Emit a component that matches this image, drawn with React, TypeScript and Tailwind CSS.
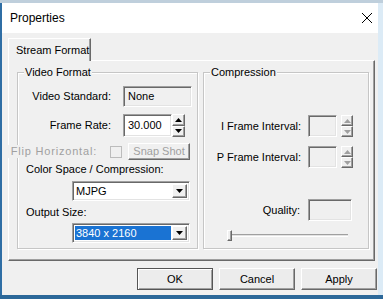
import React from "react";

const raised =
  "border border-t-white border-l-white border-r-[#696969] border-b-[#696969] shadow-[inset_-1px_-1px_0_#a0a0a0]";
const sunken =
  "border border-t-[#a0a0a0] border-l-[#a0a0a0] border-r-white border-b-white shadow-[inset_1px_1px_0_#696969,inset_-1px_-1px_0_#e3e3e3]";

function Arrow({ up, color = "#000" }: { up?: boolean; color?: string }) {
  return (
    <svg width="7" height="4" viewBox="0 0 7 4">
      {up ? (
        <path d="M3.5 0 L7 4 L0 4 Z" fill={color} />
      ) : (
        <path d="M0 0 L7 0 L3.5 4 Z" fill={color} />
      )}
    </svg>
  );
}

function Spinner({ disabled, w }: { disabled?: boolean; w: string }) {
  const c = disabled ? "#a0a0a0" : "#000";
  return (
    <div className={`flex flex-col ${w} h-full`}>
      <div className={`flex-1 flex items-center justify-center bg-[#f0f0f0] ${raised}`}>
        <Arrow up color={c} />
      </div>
      <div className={`flex-1 flex items-center justify-center bg-[#f0f0f0] ${raised}`}>
        <Arrow color={c} />
      </div>
    </div>
  );
}

function Combo({ text, selected }: { text: string; selected?: boolean }) {
  return (
    <div className={`ml-[54px] w-[118px] h-[20px] bg-white flex items-stretch p-[2px] ${sunken}`}>
      <div className="flex-1 flex items-center pr-[1px]">
        <span
          className={`h-full flex items-center pl-[1px] flex-1 ${
            selected ? "bg-[#1a73d3] text-white" : "text-black"
          }`}
        >
          {text}
        </span>
      </div>
      <div className={`w-[15px] flex items-center justify-center bg-[#f0f0f0] ${raised}`}>
        <Arrow />
      </div>
    </div>
  );
}

function Group({
  title,
  className,
  children,
}: {
  title: string;
  className: string;
  children: React.ReactNode;
}) {
  return (
    <div
      className={`relative border border-[#c6c6c6] shadow-[inset_1px_1px_0_#fff,1px_1px_0_#fff] ${className}`}
    >
      <span className="absolute -top-[8px] left-[6px] bg-[#f0f0f0] px-[1px] leading-[14px]">
        {title}
      </span>
      {children}
    </div>
  );
}

function Btn({ label, def }: { label: string; def?: boolean }) {
  return (
    <div
      className={`w-[76px] h-[22px] flex items-center justify-center bg-[#ececec] border ${
        def
          ? "border-[#555] shadow-[inset_1px_1px_0_#fff,inset_-1px_-1px_0_#a0a0a0]"
          : "border-t-white border-l-white border-r-[#696969] border-b-[#696969] shadow-[inset_-1px_-1px_0_#a0a0a0]"
      }`}
    >
      {label}
    </div>
  );
}

export default function App() {
  return (
    <div
      className="w-[383px] h-[299px] flex flex-col overflow-hidden text-[11px] text-black leading-[13px]"
      style={{ fontFamily: '"Liberation Sans", Arial, sans-serif' }}
    >
      <div className="h-[3px] bg-[#bfcfdc]" />
      <div className="flex flex-1 min-h-0">
        <div className="w-[2px] bg-[#2f6ea5]" />
        <div className="w-[376px] flex flex-col">
          {/* Title bar */}
          <div className="h-[30px] bg-white flex items-center justify-between pl-[8px] pr-[1px]">
            <span className="text-[12px] leading-[14px]">Properties</span>
            <svg width="20" height="20" viewBox="0 0 20 20">
              <path d="M5 5 L15 15 M15 5 L5 15" stroke="#000" strokeWidth="1" />
            </svg>
          </div>
          {/* Body */}
          <div className="flex-1 bg-[#f0f0f0] flex flex-col pt-[5px] pl-[6px]">
            {/* Tab header */}
            <div className="flex">
              <div className="relative z-10 -mb-[1px] w-[83px] h-[23px] bg-[#f0f0f0] border-t border-l border-r border-t-white border-l-white border-r-[#696969] shadow-[inset_-1px_0_0_#a0a0a0] flex items-center pl-[7px]">
                Stream Format
              </div>
            </div>
            {/* Panel */}
            <div className="w-[367px] h-[201px] border border-t-white border-l-white border-r-[#696969] border-b-[#696969] shadow-[inset_-1px_-1px_0_#a0a0a0] flex gap-[5px] pt-[11px] pl-[8px]">
              {/* Video Format */}
              <Group title="Video Format" className="w-[181px] h-[177px] flex flex-col">
                <div className="mt-[13px] h-[21px] flex items-center">
                  <div className="w-[93px] text-right">Video Standard:</div>
                  <div className={`ml-[12px] w-[69px] h-full flex items-center pl-[4px] ${sunken}`}>
                    None
                  </div>
                </div>
                <div className="mt-[7px] h-[23px] flex items-center">
                  <div className="w-[93px] text-right">Frame Rate:</div>
                  <div className={`ml-[12px] w-[49px] h-full flex items-center pl-[4px] bg-white ${sunken}`}>
                    30.000
                  </div>
                  <Spinner w="w-[13px]" />
                </div>
                <div className="mt-[6px] h-[17px] flex items-center">
                  <div className="-ml-[12px] w-[91px] shrink-0 text-right text-[#a0a0a0] whitespace-nowrap tracking-[0.8px] bg-[#f0f0f0]">
                    Flip Horizontal:
                  </div>
                  <div className="ml-[13px] shrink-0 w-[12px] h-[12px] border border-[#bcbcbc] bg-[#f0f0f0]" />
                  <div className={`ml-[6px] shrink-0 w-[62px] h-full flex items-center justify-center text-[#a0a0a0] bg-[#f0f0f0] ${raised}`}>
                    Snap Shot
                  </div>
                </div>
                <div className="mt-[3px] pl-[8px] h-[13px]">Color Space / Compression:</div>
                <div className="mt-[5px]">
                  <Combo text="MJPG" />
                </div>
                <div className="mt-[5px] pl-[8px] h-[13px]">Output Size:</div>
                <div className="mt-[4px]">
                  <Combo text="3840 x 2160" selected />
                </div>
              </Group>
              {/* Compression */}
              <Group title="Compression" className="w-[166px] h-[177px] flex flex-col">
                <div className="mt-[42px] h-[22px] flex items-center">
                  <div className="w-[97px] text-right">I Frame Interval:</div>
                  <div className={`ml-[7px] w-[29px] h-full ${sunken}`} />
                  <div className="ml-[4px] h-full">
                    <Spinner disabled w="w-[12px]" />
                  </div>
                </div>
                <div className="mt-[9px] h-[22px] flex items-center">
                  <div className="w-[97px] text-right">P Frame Interval:</div>
                  <div className={`ml-[7px] w-[29px] h-full ${sunken}`} />
                  <div className="ml-[4px] h-full">
                    <Spinner disabled w="w-[12px]" />
                  </div>
                </div>
                <div className="mt-[31px] h-[22px] flex items-center">
                  <div className="w-[96px] text-right">Quality:</div>
                  <div className={`ml-[8px] w-[44px] h-full ${sunken}`} />
                </div>
                <div className="mt-[8px] h-[12px] flex items-center pl-[23px]">
                  <div className={`w-[5px] h-[11px] bg-[#f0f0f0] ${raised}`} />
                  <div className="w-[116px] h-[3px] border-t border-t-[#a0a0a0] border-b border-b-white bg-[#e3e3e3]" />
                </div>
              </Group>
            </div>
            {/* Buttons */}
            <div className="mt-[7px] flex justify-end gap-[6px] pr-[1px]">
              <Btn label="OK" def />
              <Btn label="Cancel" />
              <Btn label="Apply" />
            </div>
          </div>
        </div>
        <div className="flex-1 bg-[#dcebf6]" />
      </div>
      <div className="h-[4px] bg-[#2c6899]" />
    </div>
  );
}
